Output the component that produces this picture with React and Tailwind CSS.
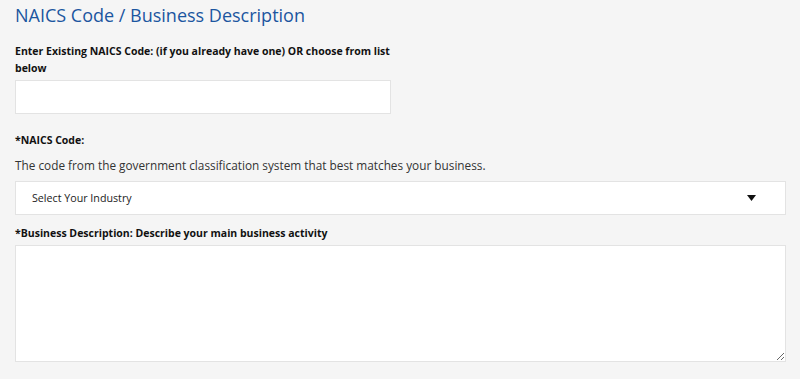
export default function App() {
  return (
    <div className="min-h-[379px] w-[800px] bg-[#f5f5f5] px-[15px] pt-[3px] font-['Open_Sans',sans-serif] text-[#111]">
      {/* Header */}
      <h2 className="text-[18px] leading-[24px] text-[#1b56a0]">NAICS Code / Business Description</h2>

      {/* Existing code */}
      <div className="mt-[16px] w-[376px]">
        <label className="block w-[390px] text-[10.5px] font-bold leading-[17px]">
          Enter Existing NAICS Code: (if you already have one) OR choose from list below
        </label>
        <input
          type="text"
          className="mt-[3px] block h-[34px] w-[376px] border border-[#e3e3e3] bg-white px-3 text-sm outline-none"
        />
      </div>

      {/* NAICS select */}
      <div className="mt-[18px] w-[771px]">
        <label className="block text-[10.5px] font-bold leading-[17px]">*NAICS Code:</label>
        <p className="mt-[8px] text-[11.8px] leading-[17px] text-[#333]">
          The code from the government classification system that best matches your business.
        </p>
        <div className="mt-[7px] flex h-[34px] items-center justify-between border border-[#e3e3e3] bg-white pl-[16px] pr-[29px] text-[10.7px] text-[#222]">
          <span>Select Your Industry</span>
          <svg width="9" height="6" viewBox="0 0 9 6">
            <path d="M0 0h9L4.5 6z" fill="#111" />
          </svg>
        </div>
      </div>

      {/* Business description */}
      <div className="mt-[10px] w-[771px]">
        <label className="block text-[10.5px] font-bold leading-[17px]">
          *Business Description: Describe your main business activity
        </label>
        <textarea className="mt-[3px] block h-[117px] w-[771px] resize-y border border-[#e3e3e3] bg-white p-2 text-sm outline-none" />
      </div>
    </div>
  );
}
